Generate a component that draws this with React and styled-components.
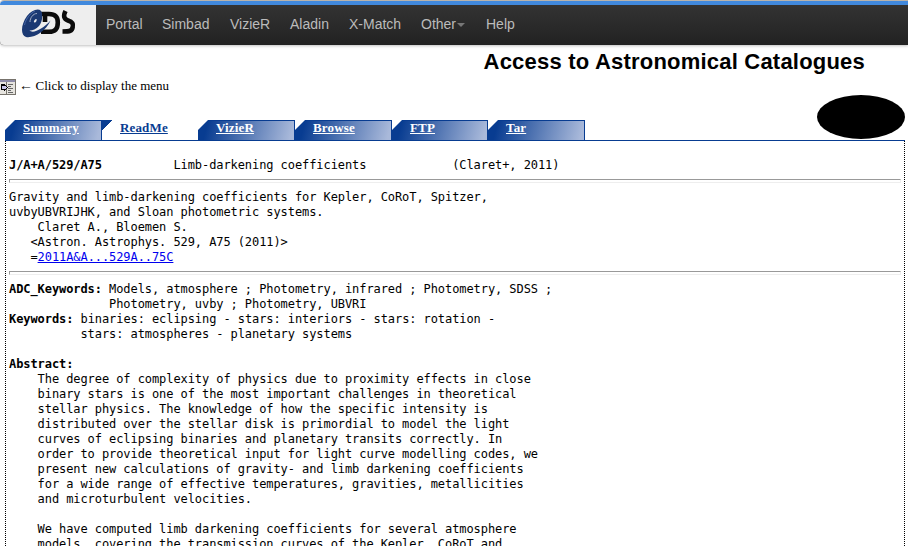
import React from "react";
import styled, { createGlobalStyle } from "styled-components";

const Global = createGlobalStyle`
  * { box-sizing: border-box; }
  html, body { margin: 0; overflow: hidden; background: #fff; }
  body { font-family: "Liberation Serif", "Times New Roman", serif; color: #000; }
`;

const Page = styled.div`
  width: 908px;
  height: 546px;
  overflow: hidden;
  display: flex;
  flex-direction: column;
`;

const NavBar = styled.header`
  height: 45px;
  flex: none;
  display: flex;
  border-top: 1px solid #b9b3ab;
  box-shadow: 0 1px 3px rgba(0, 0, 0, 0.25);
  border-radius: 4px 0 0 4px;
`;

const NavInner = styled.div`
  flex: 1;
  display: flex;
  border-top: 4px solid #4189dd;
  border-radius: 4px 0 0 4px;
  overflow: hidden;
  background: linear-gradient(#333, #222);
`;

const Brand = styled.a`
  width: 96px;
  background: #eee;
  padding: 3px 0 0 20px;
`;

const NavLinks = styled.nav`
  display: flex;
  gap: 20px;
  padding-left: 10px;
  font: 14px/38px "Liberation Sans", Arial, sans-serif;
  color: #bbb;
`;

const NavLink = styled.a`
  display: flex;
  align-items: center;
  width: ${(p) => p.$width}px;
  height: 38px;
  white-space: nowrap;
`;

const Caret = styled.i`
  margin: 2px 0 0 1px;
  border: 4px solid transparent;
  border-top-color: #777;
  border-bottom: 0;
`;

const Title = styled.h1`
  height: 33px;
  flex: none;
  margin: 0;
  padding-right: 43px;
  text-align: right;
  font: bold 22px/33px "Liberation Sans", Arial, sans-serif;
  letter-spacing: 0.21px;
`;

const MenuHint = styled.div`
  height: 17px;
  flex: none;
  display: flex;
  gap: 3px;
  font-size: 13px;
  line-height: 16px;
`;

const IconSlot = styled.span`
  display: flex;
  padding-top: 1px;
`;

const Arrow = styled.span`
  width: 13.5px;
  font-size: 14px;
  line-height: 15px;
`;

const TabRow = styled.div`
  height: 46px;
  flex: none;
  display: flex;
  justify-content: space-between;
  align-items: flex-end;
  margin: 0 3px 0 5px;
  border-bottom: 1px solid #083c91;
`;

const Tabs = styled.div`
  display: flex;
`;

const Tab = styled.a`
  width: ${(p) => p.$width}px;
  height: 20px;
  padding: 0 0 0 18px;
  font-weight: bold;
  font-size: 13px;
  line-height: 13px;
  letter-spacing: 0.15px;
  text-decoration: underline;
  color: ${(p) => (p.$active ? "#083c91" : "#fff")};
  border: 1px solid ${(p) => (p.$active ? "transparent" : "#083c91")};
  border-width: 1px 1px 0 0;
  background: ${(p) =>
    p.$active
      ? "linear-gradient(135deg, #083c91 7.5px, transparent 7.5px) 0 0 / 20px 20px no-repeat border-box"
      : "linear-gradient(105deg, #083c91 10%, #a9b9da 96%)"};
  clip-path: ${(p) => (p.$active ? "none" : "polygon(10px 0, 100% 0, 100% 100%, 0 100%, 0 10px)")};
`;

const Blob = styled.div`
  width: 88px;
  height: 44px;
  margin-bottom: 1px;
  border-radius: 50%;
  background: #000;
`;

const Panel = styled.main`
  flex: 1;
  overflow: hidden;
  margin: 0 3px 0 5px;
  padding: 17px 3px 0;
  border: 1px dotted #000;
  border-width: 0 1px;
`;

const Pre = styled.pre`
  margin: 0;
  font: 12px/15px "DejaVu Sans Mono", monospace;
  letter-spacing: -0.077px;
`;

const Rule = styled.hr`
  height: 4px;
  margin: 6px 0 7px;
  border: 1px solid #eee;
  border-color: #999 #eee #eee #999;
`;

const Link = styled.a`
  color: #00e;
  text-decoration: underline;
`;

function Logo() {
  return (
    <svg width="58" height="32" viewBox="20 8 58 32" fill="none">
      <g stroke="#0b0b0b" strokeWidth="4.6">
        <path d="M41 14 H49 C56 14 57.8 17.5 57.8 22.5 C57.8 29 55 31.8 49 31.8 H41" />
        <path d="M45 14 V22" />
        <path d="M65.5 11 C63 16 64 19 68 20.5 C72.5 22 73.5 24 72.7 27 C72 31 70 31.5 62.5 31.5" />
      </g>
      <path
        d="M42 16 C43.5 7 33 8 27 16 C20.5 25 20.5 35.5 26 37 C34 38.5 46 31 50.5 20.5 C43 29 33 34 29.5 30.5 C31 31 36 29.5 39 26 C41.5 23 42.5 19 42 16Z"
        fill="#1b3973"
      />
      <path d="M34.5 22.5 C33 22 34.5 19.5 36 19 C37.5 18.5 36.5 22.5 34.5 22.5Z" fill="#eee" />
      <path d="M37 13.5 C33 13.5 30 18 30 22" stroke="#a9b3cb" strokeWidth="0.9" />
      <path d="M24.5 25 C26 18 31 13 35 11" stroke="#4364a5" strokeWidth="1" />
    </svg>
  );
}

function MenuIcon() {
  return (
    <svg width="16" height="16" viewBox="0 0 16 16" shapeRendering="crispEdges">
      <path d="M0 0H16V16H0z" fill="#77736c" />
      <path d="M0 1H15V15H0z" fill="#e6e4df" />
      <path d="M0 1H15V3H0z" fill="#8d8ba8" />
      <path d="M6 3V15" stroke="#77736c" />
      <path d="M8 5.5H13M8 7.5H11M8 9.5H13M8 11.5H11M8 13.5H13" stroke="#666" />
      <path d="M1 5H4V4L8 8.5L4 13V11H1z" fill="#000" />
      <path d="M2 7H5V6L7 8.5L5 11V10H2z" fill="#c8c5ea" />
    </svg>
  );
}

const links = [
  ["Portal", 36],
  ["Simbad", 48],
  ["VizieR", 40],
  ["Aladin", 39],
  ["X-Match", 52],
  ["Other", 45, true],
  ["Help", 29],
];

const tabs = [
  ["Summary", 97],
  ["ReadMe", 96, true],
  ["VizieR", 97],
  ["Browse", 97],
  ["FTP", 96],
  ["Tar", 97],
];

export default function App() {
  return (
    <Page>
      <Global />
      <NavBar>
        <NavInner>
          <Brand><Logo /></Brand>
          <NavLinks>
            {links.map(([label, width, menu]) => (
              <NavLink key={label} $width={width}>{label}{menu && <Caret />}</NavLink>
            ))}
          </NavLinks>
        </NavInner>
      </NavBar>
      <Title>Access to Astronomical Catalogues</Title>
      <MenuHint>
        <IconSlot><MenuIcon /></IconSlot>
        <Arrow>←</Arrow>
        <span>Click to display the menu</span>
      </MenuHint>
      <TabRow>
        <Tabs>
          {tabs.map(([label, width, active]) => (
            <Tab key={label} $width={width} $active={active}>{label}</Tab>
          ))}
        </Tabs>
        <Blob />
      </TabRow>
      <Panel>
        <Pre><b>J/A+A/529/A75</b>{"          Limb-darkening coefficients            (Claret+, 2011)"}</Pre>
        <Rule />
        <Pre>
          {`Gravity and limb-darkening coefficients for Kepler, CoRoT, Spitzer,
uvbyUBVRIJHK, and Sloan photometric systems.
    Claret A., Bloemen S.
   <Astron. Astrophys. 529, A75 (2011)>
   =`}<Link>2011A&amp;A...529A..75C</Link>
        </Pre>
        <Rule />
        <Pre>
          <b>ADC_Keywords:</b>{` Models, atmosphere ; Photometry, infrared ; Photometry, SDSS ;
              Photometry, uvby ; Photometry, UBVRI
`}<b>Keywords:</b>{` binaries: eclipsing - stars: interiors - stars: rotation -
          stars: atmospheres - planetary systems

`}<b>Abstract:</b>{`
    The degree of complexity of physics due to proximity effects in close
    binary stars is one of the most important challenges in theoretical
    stellar physics. The knowledge of how the specific intensity is
    distributed over the stellar disk is primordial to model the light
    curves of eclipsing binaries and planetary transits correctly. In
    order to provide theoretical input for light curve modelling codes, we
    present new calculations of gravity- and limb darkening coefficients
    for a wide range of effective temperatures, gravities, metallicities
    and microturbulent velocities.

    We have computed limb darkening coefficients for several atmosphere
    models, covering the transmission curves of the Kepler, CoRoT and`}
        </Pre>
      </Panel>
    </Page>
  );
}
